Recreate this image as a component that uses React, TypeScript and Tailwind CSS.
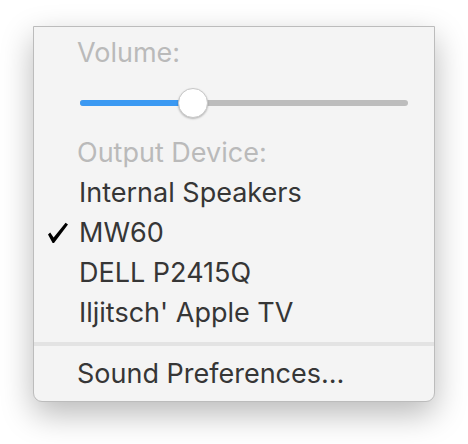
import React from 'react';

const devices = ['Internal Speakers', 'MW60', 'DELL P2415Q', "Iljitsch' Apple TV"];

const CheckMark = () => (
  <svg width="22" height="22" viewBox="0 0 22 22" className="block">
    <path
      d="M1 12.5 L3.2 10.6 L6.6 15.6 L18.6 0.8 L21 2.6 L7 21 L5.6 21 Z"
      fill="#000"
    />
  </svg>
);

export default function App() {
  const selected = 'MW60';
  const volume = 0.34;

  return (
    <div className="w-[468px] h-[444px] bg-white pt-[26px] pl-[33px]" style={{ fontFamily: 'Inter, "Open Sans", sans-serif' }}>
      <div className="w-[402px] h-[376px] bg-[#f4f4f4] border border-[#bcbcbc] rounded-b-[9px] shadow-[0_12px_32px_rgba(0,0,0,0.28)] pt-[6px] flex flex-col">
        <div className="pl-[43px] h-[40px] leading-[40px] text-[27px] text-[#bababa]">Volume:</div>

        <div className="h-[60px] flex items-center pl-[46px]">
          <div className="relative w-[328px] h-[6px] rounded-full bg-[#bdbdbd]">
            <div className="absolute left-0 top-0 h-full rounded-full bg-[#3b99f2]" style={{ width: `${volume * 100}%` }} />
            <div
              className="absolute top-1/2 w-[30px] h-[30px] -ml-[15px] -mt-[15px] rounded-full bg-white border border-[#c8c8c8] shadow-[0_1px_2px_rgba(0,0,0,0.25)]"
              style={{ left: `${volume * 100 + 0.5}%` }}
            />
          </div>
        </div>

        <div className="pl-[43px] h-[40px] leading-[40px] text-[27px] text-[#bababa]">Output Device:</div>

        {devices.map((d) => (
          <div key={d} className="flex items-center h-[40px] text-[27px] leading-[40px] text-[#363636]">
            <div className="w-[45px] pl-[13px] flex items-center">
              {d === selected && <CheckMark />}
            </div>
            <span>{d}</span>
          </div>
        ))}

        <div className="mt-[9px] h-[4px] bg-[#e3e3e3]" />

        <div className="mt-[8px] pl-[43px] h-[40px] leading-[40px] text-[27px] text-[#363636]">Sound Preferences…</div>
      </div>
    </div>
  );
}
